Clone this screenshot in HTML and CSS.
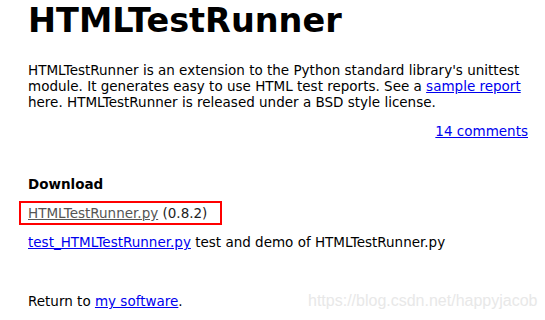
FILE: index.html
```html
<!DOCTYPE html>
<html>
<head>
<meta charset="utf-8">
<link rel="stylesheet" href="styles.css">
</head>
<body>
<div class="page">
  <h1 class="title">HTMLTestRunner</h1>
  <p class="intro">HTMLTestRunner is an extension to the Python standard library's unittest module. It generates easy to use HTML test reports. See a <a href="#">sample report</a> here. HTMLTestRunner is released under a BSD style license.</p>
  <div class="comments"><a href="#">14 comments</a></div>
  <h2 class="section">Download</h2>
  <div class="dl-box"><a class="visited" href="#">HTMLTestRunner.py</a> (0.8.2)</div>
  <p class="dl-line"><a href="#">test_HTMLTestRunner.py</a> test and demo of HTMLTestRunner.py</p>
  <div class="footer">
    <p class="return">Return to <a href="#">my software</a>.</p>
    <span class="watermark">https://blog.csdn.net/happyjacob</span>
  </div>
</div>
</body>
</html>
```

FILE: styles.css
```css
html, body {
  margin: 0;
  padding: 0;
  background: #fff;
}
body {
  font-family: "DejaVu Sans", Verdana, sans-serif;
  font-size: 13.5px;
  color: #000;
}
a {
  color: #0000ee;
}
a.visited {
  color: #555;
}
.page {
  width: 500px;
  padding-left: 28px;
}
.title {
  margin: 0;
  padding-top: 2px;
  font-size: 33.5px;
  line-height: 38px;
  font-weight: bold;
}
.intro {
  margin: 22px 0 0;
  line-height: 16px;
}
.comments {
  margin-top: 13px;
  text-align: right;
  line-height: 16px;
}
.section {
  margin: 37px 0 0;
  font-size: 13.5px;
  font-weight: bold;
  line-height: 16px;
}
.dl-box {
  margin: 9px 0 0 -9px;
  width: 192px;
  height: 20px;
  padding-left: 7px;
  border: 2px solid #ff0000;
  line-height: 20px;
  color: #222;
}
.dl-line {
  margin: 9px 0 0;
  line-height: 16px;
}
.footer {
  position: relative;
  margin-top: 43px;
}
.return {
  margin: 0;
  line-height: 16px;
  white-space: nowrap;
}
.watermark {
  position: absolute;
  left: 280px;
  top: -2px;
  font-family: "Liberation Sans", Arial, sans-serif;
  font-size: 16px;
  line-height: 20px;
  color: #e8e8e8;
  white-space: nowrap;
}
```
